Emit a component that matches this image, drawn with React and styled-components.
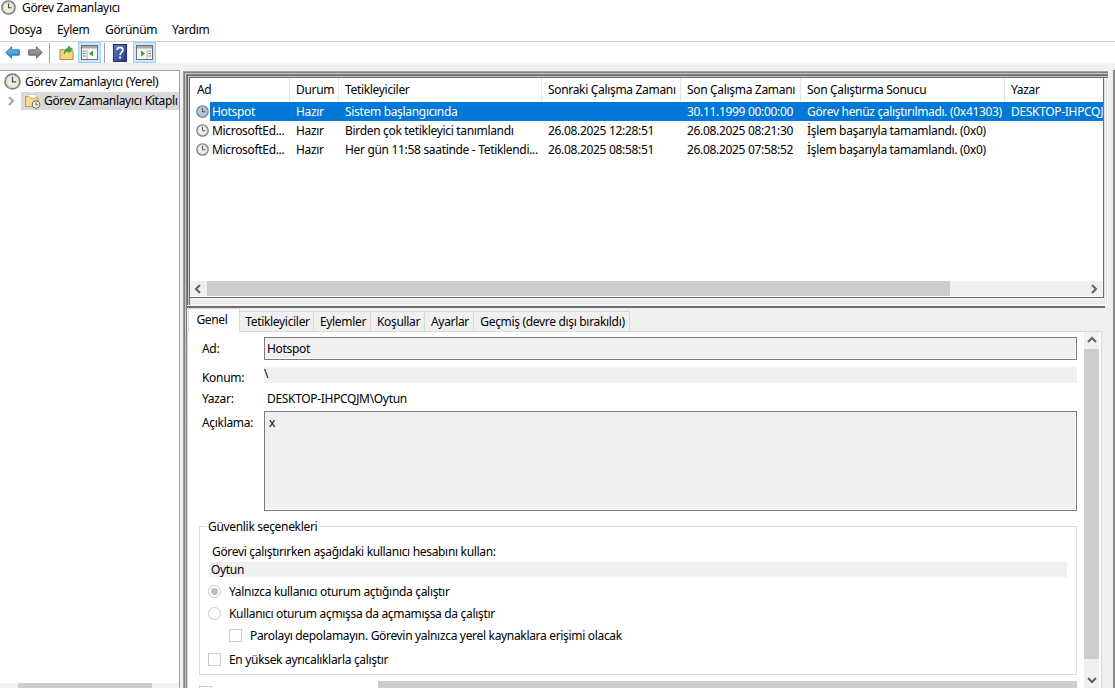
import React from "react";
import styled, { createGlobalStyle } from "styled-components";

const GlobalStyle = createGlobalStyle`
  html, body {
    margin: 0;
    padding: 0;
    background: #fff;
  }
  body {
    font-family: "Noto Sans", "Liberation Sans", sans-serif;
    font-size: 12px;
    color: #000;
  }
`;

const Window = styled.div`
  width: 1115px;
  height: 688px;
  overflow: hidden;
  display: flex;
  flex-direction: column;
  background: #fff;
  letter-spacing: -0.32px;
`;

const TitleBar = styled.div`
  height: 20px;
  display: flex;
  align-items: center;
  gap: 6px;
  padding: 0 0 5px 1px;
  box-sizing: border-box;
  flex: none;
`;

const MenuBar = styled.div`
  height: 22px;
  display: flex;
  align-items: center;
  padding: 0 0 3px 9px;
  box-sizing: border-box;
  border-bottom: 1px solid #d0d0d0;
  flex: none;
`;

const MenuItem = styled.span`
  width: ${(p) => p.$w}px;
`;

const Toolbar = styled.div`
  height: 21px;
  display: flex;
  align-items: center;
  padding-left: 4px;
  flex: none;
`;

const ToolButton = styled.div`
  width: ${(p) => p.$w || 23}px;
  height: 21px;
  margin-left: ${(p) => p.$ml || 0}px;
  display: flex;
  align-items: center;
  justify-content: center;
  box-sizing: border-box;
  background: ${(p) => (p.$active ? "#cce8ff" : "transparent")};
  border: 1px solid ${(p) => (p.$active ? "#99d1ff" : "transparent")};
`;

const ToolSeparator = styled.div`
  width: 1px;
  height: 20px;
  background: #a0a0a0;
  margin-left: ${(p) => p.$ml}px;
`;

const Body = styled.div`
  flex: 1;
  min-height: 0;
  display: flex;
  background: #f0f0f0;
  padding-top: 7px;
`;

const TreePane = styled.div`
  width: 179px;
  flex: none;
  display: flex;
  flex-direction: column;
  background: #fff;
  border-top: 1px solid #a0a0a0;
  box-sizing: border-box;
`;

const TreeList = styled.div`
  flex: 1;
  overflow: hidden;
  padding-top: 1px;
`;

const TreeRow = styled.div`
  height: 19px;
  display: flex;
  align-items: center;
  white-space: nowrap;
  overflow: hidden;
  padding-left: ${(p) => p.$indent}px;
  gap: ${(p) => p.$gap}px;
`;

const TreeSelection = styled.div`
  display: flex;
  align-items: center;
  gap: 3px;
  background: #d9d9d9;
  height: 18px;
  width: 158px;
  padding-left: 3px;
  box-sizing: border-box;
  overflow: hidden;
  flex: none;
`;

const Chevron = styled.span`
  width: 12px;
  display: flex;
  justify-content: center;
  flex: none;
`;

const TreeScroll = styled.div`
  height: 5px;
  display: flex;
  background: #f0f0f0;
  flex: none;
`;

const TreeThumb = styled.div`
  width: 134px;
  margin-left: 18px;
  background: #cdcdcd;
`;

const Splitter = styled.div`
  width: 1px;
  background: #a0a0a0;
  flex: none;
`;

const RightPane = styled.div`
  flex: 1;
  min-width: 0;
  display: flex;
  flex-direction: column;
  border-right: 2px solid #8a8a8a;
  padding: 1px 5px 0 3px;
`;

const ListFrame = styled.div`
  height: 234px;
  flex: none;
  display: flex;
  box-sizing: border-box;
  padding: 7px 5px 7px 7px;
  box-shadow:
    inset 1px 1px 0 #a0a0a0,
    inset 2px 2px 0 #808080,
    inset 3px 3px 0 #c8c8c8,
    inset 4px 4px 0 #808080,
    inset 5px 5px 0 #696969,
    inset 6px 6px 0 #c8c8c8,
    inset 7px 7px 0 #696969,
    inset -1px -1px 0 #f8f8f8,
    inset -2px -2px 0 #e3e3e3,
    inset -3px -3px 0 #f8f8f8,
    inset -4px -4px 0 #e3e3e3,
    inset -5px -5px 0 #f0f0f0;
`;

const ListInner = styled.div`
  flex: 1;
  min-width: 0;
  display: flex;
  flex-direction: column;
  background: #fff;
  overflow: hidden;
  border-right: 1px solid #6f6f6f;
  border-bottom: 1px solid #6f6f6f;
  margin-right: -1px;
`;

const GridRow = styled.div`
  display: grid;
  grid-template-columns: 99px 49px 203px 139px 120px 204px 110px;
  flex: none;
  white-space: nowrap;
`;

const HeaderRow = styled(GridRow)`
  height: 24px;
`;

const HeaderCell = styled.div`
  display: flex;
  align-items: center;
  padding: 0 0 2px 7px;
  box-shadow: 1px 0 0 #e5e5e5;
  overflow: hidden;
  box-sizing: border-box;
  &:last-child {
    box-shadow: none;
  }
`;

const DataRow = styled(GridRow)`
  height: 19px;
  color: ${(p) => (p.$selected ? "#fff" : "#000")};
`;

const NameCell = styled.div`
  display: flex;
  align-items: center;
  gap: 3px;
  padding-left: 6px;
  overflow: hidden;
  background: ${(p) =>
    p.$selected ? "linear-gradient(90deg, #fff 20px, #0078d7 20px)" : "transparent"};
`;

const DataCell = styled.div`
  display: flex;
  align-items: center;
  padding-left: 7px;
  overflow: hidden;
  background: ${(p) => (p.$selected ? "#0078d7" : "transparent")};
`;

const ListSpacer = styled.div`
  flex: 1;
`;

const HScroll = styled.div`
  height: 15px;
  display: flex;
  align-items: center;
  background: #f0f0f0;
  flex: none;
  margin-bottom: 1px;
`;

const ScrollArrow = styled.div`
  width: ${(p) => p.$w || 17}px;
  height: ${(p) => p.$h || 15}px;
  display: flex;
  align-items: center;
  justify-content: center;
  flex: none;
  background: #f0f0f0;
`;

const HThumb = styled.div`
  width: 743px;
  height: 100%;
  background: #cdcdcd;
`;

const HTrack = styled.div`
  flex: 1;
`;

const DetailPane = styled.div`
  flex: 1;
  min-height: 0;
  display: flex;
  padding: 1px 3px 0 4px;
  box-shadow:
    inset 1px 0 0 #a0a0a0,
    inset 2px 0 0 #808080,
    inset 3px 0 0 #c8c8c8,
    inset 4px 0 0 #808080;
`;

const DetailInner = styled.div`
  flex: 1;
  min-width: 0;
  border-top: 2px solid #6f6f6f;
  display: flex;
  flex-direction: column;
`;

const TabStrip = styled.div`
  height: 24px;
  display: flex;
  align-items: flex-end;
  flex: none;
  padding-left: 1px;
  position: relative;
  z-index: 1;
  margin-bottom: -1px;
`;

const Tab = styled.div`
  height: ${(p) => (p.$active ? 24 : 21)}px;
  display: flex;
  align-items: center;
  justify-content: center;
  box-sizing: border-box;
  width: ${(p) => p.$w}px;
  background: ${(p) => (p.$active ? "#fff" : "#f0f0f0")};
  border: 1px solid #d9d9d9;
  border-bottom: ${(p) => (p.$active ? "none" : "1px solid #d9d9d9")};
  border-left: ${(p) => (p.$active ? "1px solid #d9d9d9" : "none")};
  padding: ${(p) => (p.$active ? "0 4px 3px 0" : "0 0 0 2px")};
`;

const TabBody = styled.div`
  flex: 1;
  min-height: 0;
  display: flex;
  background: #fff;
  border: 1px solid #d9d9d9;
  border-bottom: none;
  margin-right: 3px;
  overflow: hidden;
`;

const Form = styled.div`
  flex: 1;
  min-width: 0;
  display: flex;
  flex-direction: column;
  padding: 5px 7px 0 11px;
`;

const FieldRow = styled.div`
  display: flex;
  align-items: ${(p) => p.$align || "center"};
  height: ${(p) => p.$h}px;
  margin-top: ${(p) => p.$mt || 0}px;
  flex: none;
`;

const FieldLabel = styled.div`
  width: 65px;
  flex: none;
  padding-left: 3px;
  box-sizing: border-box;
  margin-top: ${(p) => p.$mt || 0}px;
`;

const InputBox = styled.div`
  flex: 1;
  height: 100%;
  box-sizing: border-box;
  background: #f0f0f0;
  border: 1px solid #7a7a7a;
  box-shadow: inset -1px -1px 0 #fff;
  padding: ${(p) => (p.$multi ? "2px 0 0 4px" : "0 0 0 2px")};
  display: flex;
  align-items: ${(p) => (p.$multi ? "flex-start" : "center")};
`;

const ReadonlyStrip = styled.div`
  flex: 1;
  height: 100%;
  background: #f0f0f0;
  display: flex;
  align-items: flex-start;
  line-height: 14px;
`;

const PlainValue = styled.div`
  padding-left: 3px;
`;

const GroupBox = styled.fieldset`
  margin: 8px 0 0;
  padding: 10px 9px 0 9px;
  height: 156px;
  box-sizing: border-box;
  border: 1px solid #dcdcdc;
  flex: none;
  min-width: 0;
`;

const GroupLegend = styled.legend`
  padding: 0 2px;
  margin-left: -3px;
  line-height: 15px;
`;

const GroupCaption = styled.div`
  padding-left: 3px;
  line-height: 16px;
`;

const AccountStrip = styled.div`
  height: 15px;
  background: #f0f0f0;
  margin-top: 2px;
  padding-left: 2px;
  display: flex;
  align-items: center;
`;

const OptionRow = styled.div`
  display: flex;
  align-items: center;
  height: 16px;
  gap: 8px;
  margin-top: ${(p) => p.$mt}px;
  margin-left: -1px;
  padding-left: ${(p) => p.$indent || 0}px;
`;

const Radio = styled.span`
  width: 11px;
  height: 11px;
  border: 1px solid #c8c8c8;
  border-radius: 50%;
  display: flex;
  align-items: center;
  justify-content: center;
  flex: none;
  &::after {
    content: "";
    width: 7px;
    height: 7px;
    border-radius: 50%;
    background: ${(p) => (p.$checked ? "#bdbdbd" : "transparent")};
  }
`;

const CheckBox = styled.span`
  width: 11px;
  height: 11px;
  border: 1px solid #cccccc;
  flex: none;
  margin-top: ${(p) => p.$mt || 0}px;
`;

const BottomRow = styled.div`
  display: flex;
  align-items: flex-start;
  margin-top: 6px;
  height: 10px;
  flex: none;
`;

const BottomThumb = styled.div`
  flex: 1;
  height: 8px;
  margin-left: 166px;
  background: #cdcdcd;
`;

const VScroll = styled.div`
  width: 15px;
  flex: none;
  margin-right: 2px;
  display: flex;
  flex-direction: column;
  background: #f0f0f0;
`;

const VThumb = styled.div`
  height: 310px;
  background: #cdcdcd;
  flex: none;
`;

const ClockIcon = ({ size = 13, tint = "#f2eedd" }) => (
  <svg width={size} height={size} viewBox="0 0 16 16" style={{ flex: "none" }}>
    <circle cx="8" cy="8" r="7" fill={tint} stroke="#7c8084" strokeWidth="1.6" />
    <circle cx="8" cy="8" r="5.400" fill="none" stroke="#c9c9c4" strokeWidth="0.6" />
    <path d="M8 3.500v4.800h3.500" fill="none" stroke="#4f4f4f" strokeWidth="1.200" />
  </svg>
);

const FolderClockIcon = () => (
  <svg width="17" height="16" viewBox="0 0 17 16" style={{ flex: "none" }}>
    <path d="M1.500 3.500h4l1.500 1.500h7v8.500h-12.500z" fill="#f6dc8c" stroke="#b99a4a" />
    <path d="M4 1.500h8v3.500H7L5.500 3.500H4z" fill="#fff" stroke="#bbb" strokeWidth="0.6" />
    <circle cx="12" cy="11.500" r="3.800" fill="#f0f0ea" stroke="#666" />
    <path d="M12 9.300v2.400h1.800" fill="none" stroke="#444" strokeWidth="0.8" />
  </svg>
);

const ArrowIcon = ({ dir, id, top, bottom, edge }) => (
  <svg width="17" height="15" viewBox="0 0 17 15">
    <defs>
      <linearGradient id={id} x1="0" y1="0" x2="0" y2="1">
        <stop offset="0" stopColor={top} />
        <stop offset="1" stopColor={bottom} />
      </linearGradient>
    </defs>
    <path
      d={dir === "left" ? "M0.800 7.500L7.500 1v3.500h8.700v6H7.500V14z" : "M16.200 7.500L9.500 1v3.500H0.800v6h8.700V14z"}
      fill={`url(#${id})`}
      stroke={edge}
      strokeWidth="1"
    />
  </svg>
);

const FolderUpIcon = () => (
  <svg width="16" height="17" viewBox="0 0 16 17">
    <path d="M1 5.500h4.500L7 7h8v9H1z" fill="#f3d67f" stroke="#a98a3c" />
    <path d="M5.500 10C5.500 6 7.500 4 10 4V1.500L14.500 5 10 8.500V6.200C8 6.200 7 7.500 5.500 10z" fill="#4aa64a" stroke="#2f7d2f" strokeWidth="0.6" />
  </svg>
);

const ConsoleIcon = ({ flip }) => (
  <svg width="17" height="15" viewBox="0 0 17 15">
    <rect x="0.500" y="0.500" width="16" height="14" fill="#f7f7f7" stroke="#6f6f6f" />
    <rect x="1" y="1" width="15" height="2.500" fill="#a8a8a8" />
    <path d={flip ? "M11 5v9" : "M6 5v9"} stroke="#b0b0b0" />
    {flip ? (
      <>
        <path d="M12.500 6h2.500M12.500 8.500h2.500M12.500 11h2.500" stroke="#777" />
        <path d="M5 5.500l4 3-4 3z" fill="#2fa52f" />
      </>
    ) : (
      <>
        <path d="M2 6h2.500M2 8.500h2.500M2 11h2.500" stroke="#777" />
        <path d="M12 5.500l-4 3 4 3z" fill="#2fa52f" />
      </>
    )}
  </svg>
);

const HelpIcon = () => (
  <svg width="14" height="18" viewBox="0 0 14 18">
    <defs>
      <linearGradient id="helpFill" x1="0" y1="0" x2="1" y2="1">
        <stop offset="0" stopColor="#5f7fd0" />
        <stop offset="1" stopColor="#1f3488" />
      </linearGradient>
    </defs>
    <rect x="0.500" y="0.500" width="13" height="17" fill="url(#helpFill)" stroke="#1d2f75" />
    <path d="M4.300 6c0-3.400 5.500-3.400 5.500 0 0 2.300-2.700 2.400-2.700 5.200" fill="none" stroke="#fff" strokeWidth="1.700" />
    <rect x="6.100" y="12.500" width="2" height="2" fill="#fff" />
  </svg>
);

const Caret = ({ dir, color = "#606060" }) => {
  const paths = {
    left: "M6 1L2 5l4 4",
    right: "M2 1l4 4-4 4",
    up: "M1 6l4-4 4 4",
    down: "M1 3l4 4 4-4",
  };
  return (
    <svg width="10" height="10" viewBox="0 0 10 10">
      <path d={paths[dir]} fill="none" stroke={color} strokeWidth="2" />
    </svg>
  );
};

const menus = [
  ["Dosya", 48],
  ["Eylem", 48],
  ["Görünüm", 67],
  ["Yardım", 50],
];

const headers = [
  "Ad",
  "Durum",
  "Tetikleyiciler",
  "Sonraki Çalışma Zamanı",
  "Son Çalışma Zamanı",
  "Son Çalıştırma Sonucu",
  "Yazar",
];

const tasks = [
  {
    name: "Hotspot",
    status: "Hazır",
    trigger: "Sistem başlangıcında",
    next: "",
    last: "30.11.1999 00:00:00",
    result: "Görev henüz çalıştırılmadı. (0x41303)",
    author: "DESKTOP-IHPCQJM\\Oytun",
    selected: true,
  },
  {
    name: "MicrosoftEd...",
    status: "Hazır",
    trigger: "Birden çok tetikleyici tanımlandı",
    next: "26.08.2025 12:28:51",
    last: "26.08.2025 08:21:30",
    result: "İşlem başarıyla tamamlandı. (0x0)",
    author: "",
  },
  {
    name: "MicrosoftEd...",
    status: "Hazır",
    trigger: "Her gün 11:58 saatinde - Tetiklendi...",
    next: "26.08.2025 08:58:51",
    last: "26.08.2025 07:58:52",
    result: "İşlem başarıyla tamamlandı. (0x0)",
    author: "",
  },
];

const tabs = [
  ["Genel", 52, true],
  ["Tetikleyiciler", 74],
  ["Eylemler", 57],
  ["Koşullar", 54],
  ["Ayarlar", 49],
  ["Geçmiş (devre dışı bırakıldı)", 156],
];

export default function App() {
  return (
    <Window>
      <GlobalStyle />
      <TitleBar>
        <ClockIcon size={15} />
        <span>Görev Zamanlayıcı</span>
      </TitleBar>
      <MenuBar>
        {menus.map(([label, w]) => (
          <MenuItem key={label} $w={w}>
            {label}
          </MenuItem>
        ))}
      </MenuBar>
      <Toolbar>
        <ToolButton $w={17}>
          <ArrowIcon dir="left" id="backFill" top="#7cc4f2" bottom="#1f86d0" edge="#1f6fb0" />
        </ToolButton>
        <ToolButton $w={17} $ml={6}>
          <ArrowIcon dir="right" id="nextFill" top="#b0b0b0" bottom="#707070" edge="#606060" />
        </ToolButton>
        <ToolSeparator $ml={5} />
        <ToolButton $w={17} $ml={8}>
          <FolderUpIcon />
        </ToolButton>
        <ToolButton $active $ml={3}>
          <ConsoleIcon />
        </ToolButton>
        <ToolSeparator $ml={3} />
        <ToolButton $w={17} $ml={6}>
          <HelpIcon />
        </ToolButton>
        <ToolButton $active $ml={5}>
          <ConsoleIcon flip />
        </ToolButton>
      </Toolbar>
      <Body>
        <TreePane>
          <TreeList>
            <TreeRow $indent={4} $gap={4}>
              <ClockIcon size={17} />
              <span>Görev Zamanlayıcı (Yerel)</span>
            </TreeRow>
            <TreeRow $indent={6} $gap={3}>
              <Chevron>
                <Caret dir="right" color="#a6a6a6" />
              </Chevron>
              <TreeSelection>
                <FolderClockIcon />
                <span>Görev Zamanlayıcı Kitaplı</span>
              </TreeSelection>
            </TreeRow>
          </TreeList>
          <TreeScroll>
            <TreeThumb />
          </TreeScroll>
        </TreePane>
        <Splitter />
        <RightPane>
          <ListFrame>
            <ListInner>
              <HeaderRow>
                {headers.map((h) => (
                  <HeaderCell key={h}>{h}</HeaderCell>
                ))}
              </HeaderRow>
              {tasks.map((t, i) => (
                <DataRow key={i} $selected={t.selected}>
                  <NameCell $selected={t.selected}>
                    <ClockIcon tint={t.selected ? "#a9c8e0" : "#f2eedd"} />
                    <span>{t.name}</span>
                  </NameCell>
                  <DataCell $selected={t.selected}>{t.status}</DataCell>
                  <DataCell $selected={t.selected}>{t.trigger}</DataCell>
                  <DataCell $selected={t.selected}>{t.next}</DataCell>
                  <DataCell $selected={t.selected}>{t.last}</DataCell>
                  <DataCell $selected={t.selected}>{t.result}</DataCell>
                  <DataCell $selected={t.selected}>{t.author}</DataCell>
                </DataRow>
              ))}
              <ListSpacer />
              <HScroll>
                <ScrollArrow>
                  <Caret dir="left" />
                </ScrollArrow>
                <HThumb />
                <HTrack />
                <ScrollArrow>
                  <Caret dir="right" />
                </ScrollArrow>
              </HScroll>
            </ListInner>
          </ListFrame>
          <DetailPane>
            <DetailInner>
              <TabStrip>
                {tabs.map(([label, w, active]) => (
                  <Tab key={label} $w={w} $active={active}>
                    {label}
                  </Tab>
                ))}
              </TabStrip>
              <TabBody>
                <Form>
                  <FieldRow $h={23}>
                    <FieldLabel>Ad:</FieldLabel>
                    <InputBox>Hotspot</InputBox>
                  </FieldRow>
                  <FieldRow $h={16} $mt={7}>
                    <FieldLabel $mt={4}>Konum:</FieldLabel>
                    <ReadonlyStrip>\</ReadonlyStrip>
                  </FieldRow>
                  <FieldRow $h={16} $mt={7}>
                    <FieldLabel>Yazar:</FieldLabel>
                    <PlainValue>DESKTOP-IHPCQJM\Oytun</PlainValue>
                  </FieldRow>
                  <FieldRow $h={100} $mt={5} $align="flex-start">
                    <FieldLabel $mt={3}>Açıklama:</FieldLabel>
                    <InputBox $multi>x</InputBox>
                  </FieldRow>
                  <GroupBox>
                    <GroupLegend>Güvenlik seçenekleri</GroupLegend>
                    <GroupCaption>Görevi çalıştırırken aşağıdaki kullanıcı hesabını kullan:</GroupCaption>
                    <AccountStrip>Oytun</AccountStrip>
                    <OptionRow $mt={6}>
                      <Radio $checked />
                      <span>Yalnızca kullanıcı oturum açtığında çalıştır</span>
                    </OptionRow>
                    <OptionRow $mt={6}>
                      <Radio />
                      <span>Kullanıcı oturum açmışsa da açmamışsa da çalıştır</span>
                    </OptionRow>
                    <OptionRow $mt={6} $indent={21}>
                      <CheckBox />
                      <span>Parolayı depolamayın. Görevin yalnızca yerel kaynaklara erişimi olacak</span>
                    </OptionRow>
                    <OptionRow $mt={8}>
                      <CheckBox />
                      <span>En yüksek ayrıcalıklarla çalıştır</span>
                    </OptionRow>
                  </GroupBox>
                  <BottomRow>
                    <CheckBox $mt={5} />
                    <BottomThumb />
                  </BottomRow>
                </Form>
                <VScroll>
                  <ScrollArrow $w={15} $h={17}>
                    <Caret dir="up" />
                  </ScrollArrow>
                  <VThumb />
                  <ListSpacer />
                  <ScrollArrow $w={15} $h={17}>
                    <Caret dir="down" />
                  </ScrollArrow>
                </VScroll>
              </TabBody>
            </DetailInner>
          </DetailPane>
        </RightPane>
      </Body>
    </Window>
  );
}
